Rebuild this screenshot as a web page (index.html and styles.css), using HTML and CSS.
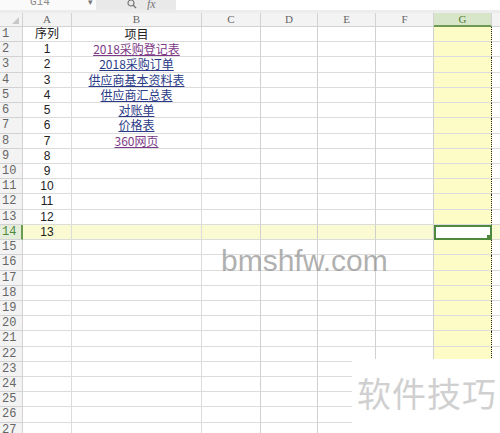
FILE: index.html
```html
<!DOCTYPE html>
<html lang="zh-CN">
<head>
  <meta charset="UTF-8" />
  <title>目录</title>
  <link rel="stylesheet" href="styles.css">
</head>
<body>

  <div class="topbar">
    <div class="namebox">
      <span class="cellref">G14</span>
      <span class="drop">▾</span>
    </div>
    <div class="fxbox">
      <svg class="lens" width="10" height="10" viewBox="0 0 10 10">
        <circle cx="4" cy="4" r="3" fill="none" stroke="#777" stroke-width="1.2" />
        <line x1="6.2" y1="6.2" x2="9" y2="9" stroke="#777" stroke-width="1.4" />
      </svg>
      <span class="fx">fx</span>
    </div>
  </div>

  <div class="sheet" id="sheet"></div>

  <div class="mark-url">bmshfw.com</div>
  <div class="mark-tips">软件技巧</div>

  <script>
    const cols = ["A", "B", "C", "D", "E", "F", "G", ""];
    const items = [
      ["2018采购登记表", "visited"],
      ["2018采购订单", ""],
      ["供应商基本资料表", ""],
      ["供应商汇总表", ""],
      ["对账单", ""],
      ["价格表", ""],
      ["360网页", "visited"]
    ];
    const activeRow = 14;
    const sheet = document.getElementById("sheet");

    function cell(cls, html) {
      const div = document.createElement("div");
      div.className = "cell " + cls;
      div.innerHTML = html || "";
      sheet.appendChild(div);
      return div;
    }

    // header row
    cell("corner", "<span class='tri'></span>");
    cols.forEach(c => cell("colhead" + (c === "G" ? " sel" : "") + (c === "" ? " tail" : ""), c));

    // body rows
    for (let r = 1; r <= 27; r++) {
      const hot = r === activeRow ? " hot" : "";
      cell("rowhead" + hot, r);
      cols.forEach(c => {
        let cls = "col" + (c || "X") + hot;
        let html = "";
        if (c === "A") {
          if (r === 1) html = "序列";
          else if (r <= 14) html = r - 1;
        }
        if (c === "B") {
          if (r === 1) html = "项目";
          else if (items[r - 2]) {
            const it = items[r - 2];
            html = `<a class="link ${it[1]}" href="#">${it[0]}</a>`;
          }
        }
        if (c === "G" && r === activeRow) cls += " active";
        cell(cls, html);
      });
    }
  </script>
</body>
</html>
```

FILE: styles.css
```css
body {
  margin: 0;
  width: 500px;
  height: 433px;
  overflow: hidden;
  background: #fff;
  font-family: "Liberation Sans", "Noto Sans CJK SC", sans-serif;
  position: relative;
}

/* formula bar, cut at the top edge */
.topbar {
  display: flex;
  height: 10px;
  border-bottom: 3px solid #ececec;
  overflow: hidden;
}

.namebox {
  width: 96px;
  position: relative;
  background: #fafafa;
}

.cellref {
  position: absolute;
  left: 30px;
  top: -4px;
  font-family: "Liberation Mono", monospace;
  font-size: 11px;
  line-height: 12px;
  color: #888;
}

.drop {
  position: absolute;
  left: 88px;
  top: -3px;
  font-size: 9px;
  line-height: 10px;
  color: #777;
}

.fxbox {
  width: 80px;
  background: #e9e9e9;
  display: flex;
  align-items: flex-end;
  gap: 10px;
  padding-left: 31px;
  box-sizing: border-box;
}

.lens {
  margin-bottom: 1px;
}

.fx {
  font-family: "Liberation Serif", serif;
  font-style: italic;
  font-size: 12px;
  color: #777;
  line-height: 10px;
  margin-bottom: 1px;
}

/* grid */
.sheet {
  display: grid;
  grid-template-columns: 23px 49px 130px 59px 57px 58px 58px 58px 8px;
  grid-template-rows: 14px repeat(27, 15.23px);
}

.cell {
  box-sizing: border-box;
  border-right: 1px solid #dcdcdc;
  border-bottom: 1px solid #dcdcdc;
  font-size: 12px;
  line-height: 14px;
  text-align: center;
  color: #222;
  white-space: nowrap;
  overflow: hidden;
  position: relative;
}

.corner,
.colhead {
  background: #f3f3f3;
  border-color: #d2d2d2;
}

.colhead {
  font-family: "Liberation Serif", serif;
  font-size: 11px;
  line-height: 13px;
  color: #666;
}

.colhead.sel {
  background: #d7e5c9;
  color: #4d7d35;
  border-bottom: 2px solid #6b9a52;
}

.colhead.tail {
  border-right: none;
}

.tri {
  position: absolute;
  right: 3px;
  bottom: 2px;
  width: 0;
  height: 0;
  border-left: 7px solid transparent;
  border-bottom: 7px solid #c8c8c8;
}

.rowhead {
  background: #f3f3f3;
  border-color: #d2d2d2;
  text-align: left;
  padding-left: 2px;
  font-family: "Liberation Mono", monospace;
  font-size: 12px;
  color: #666;
}

.rowhead.hot {
  background: #e4edd9;
  color: #4e8a3c;
  border-right: 2px solid #6b9a52;
}

.colA {
  font-family: "Liberation Sans", "Noto Sans CJK SC", sans-serif;
  font-size: 12px;
}

.colB {
  font-family: "Noto Sans CJK SC", sans-serif;
}

.colC, .colD, .colE, .colF {
  border-right-color: #d0d0d0;
}

.colG {
  background: #fdfcc6;
  border-right: 1px dotted #222;
}

.colX {
  border-right: none;
}

.hot {
  background: #fbfbd3;
}

.colG.active {
  background: #fff;
  border: 2px solid #4f8a3c;
}

.colG.active::after {
  content: "";
  position: absolute;
  right: -2px;
  bottom: -2px;
  width: 4px;
  height: 4px;
  background: #4f8a3c;
  border: 1px solid #fff;
}

.link {
  display: inline-block;
  height: 14px;
  line-height: 14px;
  color: #2a3a86;
  text-decoration: underline;
}

.link.visited {
  color: #7d3a86;
}

/* watermarks laid over the sheet */
.mark-url {
  position: absolute;
  left: 221px;
  top: 244px;
  font-family: "Liberation Sans", sans-serif;
  font-size: 30px;
  color: rgba(150, 150, 150, 0.75);
}

.mark-tips {
  position: absolute;
  left: 352px;
  top: 359px;
  width: 148px;
  height: 74px;
  background: #fff;
  box-sizing: border-box;
  padding: 14px 0 0 5px;
  font-family: "Noto Sans CJK SC", sans-serif;
  font-size: 34px;
  line-height: 40px;
  letter-spacing: 1px;
  color: #d0d0d0;
}
```
